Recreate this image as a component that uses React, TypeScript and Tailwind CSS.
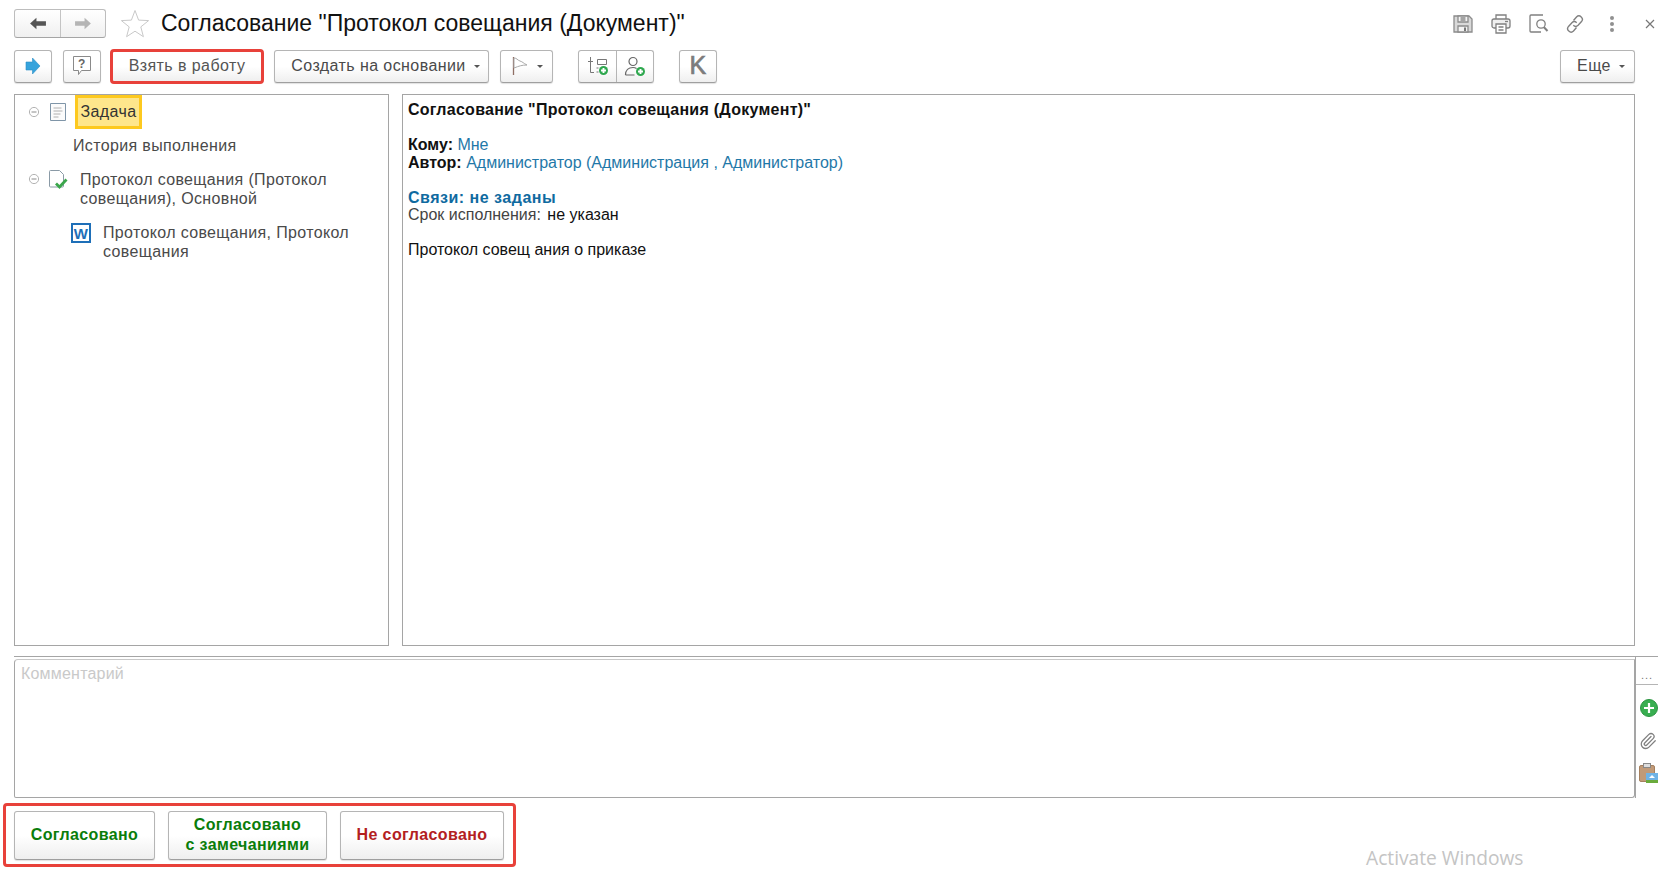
import React from "react";
import { Paperclip } from "lucide-react";

const btn = "flex items-center justify-center rounded-[3px] border border-[#b5b5b5] border-b-[#9f9f9f] bg-gradient-to-b from-white via-white to-[#efefef] shadow-[0_1px_1px_rgba(0,0,0,0.12)]";
const caret = <span className="ml-2 mt-[1px] h-0 w-0 border-x-[3px] border-t-[3px] border-x-transparent border-t-[#555]" />;

function GreenPlus({ x, y, r }: { x: number; y: number; r: number }) {
  return (
    <g stroke="none">
      <circle cx={x} cy={y} r={r} fill="#2fa84f" />
      <path d={`M${x - r * 0.55} ${y}H${x + r * 0.55}M${x} ${y - r * 0.55}V${y + r * 0.55}`} stroke="#fff" strokeWidth={r * 0.42} />
    </g>
  );
}

function Minus() {
  return (
    <svg width="12" height="12" viewBox="0 0 12 12" className="shrink-0">
      <circle cx="6" cy="6" r="4.6" fill="#fff" stroke="#b3b3b3" />
      <path d="M3.5 6h5" stroke="#8a8a8a" />
    </svg>
  );
}

export default function App() {
  return (
    <div className="flex h-[871px] w-[1659px] flex-col overflow-hidden bg-white font-['Liberation_Sans',Arial,sans-serif] text-[16px] text-[#4a4a4a] relative">
      {/* Title row */}
      <div className="ml-[14px] mr-[4px] mt-[9px] flex h-[29px] items-center">
        <div className="flex h-[29px] w-[92px] rounded-[3px] border border-[#bdbdbd] border-b-[#a5a5a5] bg-gradient-to-b from-white to-[#f0f0f0]">
          <div className="flex w-[46px] items-center justify-center border-r border-[#c4c4c4]">
            <svg width="19" height="15" viewBox="0 0 18 14"><path d="M8 1.5 2 7l6 5.5V9.200h9V4.800H8z" fill="#555" /></svg>
          </div>
          <div className="flex flex-1 items-center justify-center">
            <svg width="19" height="15" viewBox="0 0 18 14"><path d="M10 1.5 16 7l-6 5.500V9.200H1V4.800h9z" fill="#b5b5b5" /></svg>
          </div>
        </div>
        <svg width="30" height="29" viewBox="0 0 30 29" className="ml-[14px]">
          <path d="M15 1.500l3.600 9.600 10 .5-7.800 6.300 2.600 9.800L15 22.200l-8.400 5.500 2.600-9.800-7.800-6.300 10-.5z" fill="#fff" stroke="#c9c9c9" />
        </svg>
        <div className="ml-[11px] whitespace-nowrap text-[23px] leading-[29px] text-[#111]">Согласование "Протокол совещания (Документ)"</div>
        <div className="ml-auto flex items-center">
          <svg width="20" height="18" viewBox="0 0 20 18" fill="none" stroke="#8c8c8c" strokeWidth="1.300">
            <path d="M1 1h15l3 3v13H1z" fill="#d9d9d9" /><path d="M5 1h10v6H5z" fill="#f3f3f3" /><path d="M5 11h10v6H5z" fill="#f3f3f3" /><path d="M7.500 3h5M7.500 5h5" /><path d="M11 12.500h2V16h-2z" fill="#777" stroke="none" />
          </svg>
          <svg width="20" height="20" viewBox="0 0 20 20" fill="none" stroke="#808080" strokeWidth="1.300" className="ml-[18px]">
            <path d="M5 5V1h10v4" /><rect x="1" y="5" width="18" height="9" rx="2" fill="#efefef" /><path d="M5 10h10v9H5z" fill="#fff" /><path d="M7.500 13h5M7.500 16h5" /><path d="M14 7.500h3" />
          </svg>
          <svg width="20" height="19" viewBox="0 0 20 19" fill="none" stroke="#808080" strokeWidth="1.300" className="ml-[18px]">
            <path d="M12 18H2a1 1 0 0 1-1-1V2a1 1 0 0 1 1-1h12" /><circle cx="12" cy="10" r="4.200" /><path d="M15 13.200 18.500 17" strokeWidth="2" />
          </svg>
          <svg width="20" height="20" viewBox="0 0 20 20" fill="none" stroke="#808080" strokeWidth="1.400" className="ml-[16px]">
            <path d="M8.500 6.500l3-3.500a3.400 3.400 0 0 1 5 4.600l-3.400 3.600a3.400 3.400 0 0 1-4.800 0" /><path d="M11.500 13.500l-3 3.500a3.400 3.400 0 0 1-5-4.600l3.400-3.600a3.400 3.400 0 0 1 4.800 0" />
          </svg>
          <div className="ml-[25px] flex flex-col gap-[2px]">
            <span className="h-[4px] w-[4px] rounded-full bg-[#909090]" />
            <span className="h-[4px] w-[4px] rounded-full bg-[#909090]" />
            <span className="h-[4px] w-[4px] rounded-full bg-[#909090]" />
          </div>
          <svg width="10" height="10" viewBox="0 0 10 10" stroke="#777" strokeWidth="1.200" className="ml-[31px]"><path d="M1 1l8 8M9 1 1 9" /></svg>
        </div>
      </div>

      {/* Toolbar */}
      <div className="ml-[14px] mr-[24px] mt-[11px] flex h-[34px] items-center tracking-[0.42px]">
        <div className={`${btn} h-[33px] w-[38px]`}>
          <svg width="16" height="18" viewBox="0 0 16 18"><path d="M7.500 1 15 9l-7.500 8v-4H1V5h6.500z" fill="#36a3dc" stroke="#2a8fc6" strokeWidth="0.600" /></svg>
        </div>
        <div className={`${btn} ml-[11px] h-[33px] w-[38px]`}>
          <svg width="20" height="22" viewBox="0 0 20 22" fill="none" stroke="#8a8a8a"><path d="M1.500 1.500h17v14h-9l-3 4v-4h-5z" fill="#fff" /><text x="10" y="13" textAnchor="middle" fontSize="12" fontWeight="700" fill="#666" stroke="none" fontFamily="Liberation Sans">?</text></svg>
        </div>
        <div className="ml-[9px] flex h-[35px] w-[154px] items-center justify-center rounded-[4px] border-[3px] border-[#e8413a] bg-gradient-to-b from-white via-white to-[#efefef] text-[#555]">Взять в работу</div>
        <div className={`${btn} ml-[10px] h-[33px] w-[215px] pl-[8px]`}>Создать на основании{caret}</div>
        <div className={`${btn} ml-[11px] h-[33px] w-[53px]`}>
          <svg width="18" height="20" viewBox="0 0 18 20" fill="none"><path d="M2.500 1v18" stroke="#8f6f64" strokeWidth="1.300" /><path d="M3 2c3 0 3 2 6 3s3 2 7 4c-5 0-8 1-13 3z" fill="#fff" stroke="#aaa" /></svg>
          {caret}
        </div>
        <div className="ml-[25px] flex h-[33px] w-[76px] rounded-[3px] border border-[#b5b5b5] border-b-[#9f9f9f] bg-gradient-to-b from-white via-white to-[#efefef] shadow-[0_1px_1px_rgba(0,0,0,0.12)]">
          <div className="flex w-[38px] items-center justify-center border-r border-[#b5b5b5]">
            <svg width="22" height="20" viewBox="0 0 22 20" fill="none" stroke="#777"><path d="M3.500 1v15.500H7M1 5.500h5" /><path d="M10.500 3.500h9v5h-9z" /><path d="M9.500 12h2M9.500 16h2" /><GreenPlus x={16.500} y={14.500} r={4.500} /></svg>
          </div>
          <div className="flex flex-1 items-center justify-center">
            <svg width="22" height="21" viewBox="0 0 22 21" fill="none" stroke="#666" strokeWidth="1.200"><circle cx="9" cy="5.500" r="4" /><path d="M1.500 19c0-5 3-7.500 7.500-7.500 1.500 0 2.500.3 3.500 1M1.500 19h9" /><GreenPlus x={16.500} y={15.500} r={4.500} /></svg>
          </div>
        </div>
        <div className={`${btn} ml-[25px] h-[33px] w-[38px] text-[25px] font-normal text-[#7c7c7c] [-webkit-text-stroke:0.7px_#7c7c7c]`}>K</div>
        <div className={`${btn} ml-auto h-[33px] w-[75px] pl-[7px]`}>Еще{caret}</div>
      </div>

      {/* Panels */}
      <div className="ml-[14px] mr-[24px] mt-[11px] flex h-[552px] gap-[13px]">
        <div className="w-[375px] border border-[#a5a5a5] tracking-[0.35px] text-[#4a4a4a]">
          <div className="flex h-[33px] items-center">
            <div className="ml-[13px] flex"><Minus /></div>
            <svg width="16" height="18" viewBox="0 0 16 18" fill="none" stroke="#7f95a8" className="ml-[10px]"><path d="M.5.500h15v17H.5z" fill="#fbfbfb" /><path d="M3.500 5h8M3.500 8h9M3.500 11h7M3.500 14h5" stroke="#b0b0b0" /></svg>
            <div className="ml-[9px] flex h-[34px] w-[67px] items-center justify-center border-[3px] border-[#fdc91f] bg-[#fee68c] text-[#333]">Задача</div>
          </div>
          <div className="ml-[58px] mt-[8px] leading-[20px]">История выполнения</div>
          <div className="mt-[14px] flex items-start">
            <div className="ml-[13px] mt-[3px] flex"><Minus /></div>
            <svg width="19" height="20" viewBox="0 0 19 20" fill="none" className="ml-[9px] shrink-0"><path d="M1.500.5h9l4 4V16a1 1 0 0 1-1 1h-12a1 1 0 0 1-1-1V1.500a1 1 0 0 1 1-1z" fill="#fff" stroke="#8a9aa6" /><path d="M7 13.500l3.500 3.500 7-7.500" stroke="#3aa64b" strokeWidth="2.800" /></svg>
            <div className="ml-[12px] w-[280px] leading-[19px]">Протокол совещания (Протокол совещания), Основной</div>
          </div>
          <div className="mt-[15px] flex items-start">
            <div className="ml-[56px] flex h-[20px] w-[20px] shrink-0 items-center justify-center border-[2px] border-[#1e6fb8] bg-white text-[15px] font-bold leading-none text-[#1e6fb8]">W</div>
            <div className="ml-[12px] w-[270px] leading-[19px]">Протокол совещания, Протокол совещания</div>
          </div>
        </div>
        <div className="min-w-0 flex-1 border border-[#a5a5a5] pl-[5px] pt-[6px] text-[16px] leading-[17.500px] text-[#111]">
          <div className="font-bold tracking-[0.26px]">Согласование "Протокол совещания (Документ)"</div>
          <div className="mt-[17.500px]"><b>Кому:</b> <span className="text-[#1f78a8]">Мне</span></div>
          <div><b>Автор:</b> <span className="text-[#1f78a8]">Администратор (Администрация , Администратор)</span></div>
          <div className="mt-[17.500px] font-bold tracking-[0.5px] text-[#0f6aa0]">Связи: не заданы</div>
          <div><span className="text-[#444]">Срок исполнения:</span> <span className="ml-[2px]">не указан</span></div>
          <div className="mt-[17.500px]">Протокол совещ ания о приказе</div>
        </div>
      </div>

      {/* Comment */}
      <div className="ml-[14px] mr-[1px] mt-[10px] flex h-[142px] border-t border-[#a5a5a5]">
        <div className="mt-[2px] h-[139px] w-[1621px] rounded-bl-[2px] rounded-br-[3px] rounded-tl-[4px] border border-x-[#a5a5a5] border-b-[#a5a5a5] border-t-[#c8c8c8] pl-[6px] pt-[2px] tracking-[0.2px] text-[#c9c9c9]">Комментарий</div>
        <div className="flex w-[23px] flex-col items-center border-l border-[#a5a5a5]">
          <div className="flex h-[28px] w-full items-center justify-center border-b border-[#b5b5b5] pt-[10px] text-[11px] tracking-[1px] text-[#777]">...</div>
          <svg width="18" height="18" viewBox="0 0 18 18" className="ml-[3px] mt-[14px] shrink-0"><circle cx="9" cy="9" r="8.500" fill="#38ae50" stroke="#2b9440" /><path d="M4 9h10M9 4v10" stroke="#fff" strokeWidth="2.200" /></svg>
          <Paperclip size={18} color="#808080" strokeWidth={1.7} className="ml-[2px] mt-[15px] shrink-0" />
          <svg width="19" height="20" viewBox="0 0 19 20" className="ml-[2px] mt-[13px] shrink-0">
            <rect x="0.500" y="2.500" width="15" height="16" rx="1.500" fill="#c19a78" stroke="#a5805f" />
            <rect x="4.500" y="0.500" width="7" height="4" fill="#ddd" stroke="#888" />
            <rect x="7" y="10" width="12" height="10" fill="#6fb3e6" />
            <path d="M7 17h12v3H7z" fill="#6aab3c" />
            <path d="M10 15l3-3 3 3z" fill="#fff" />
          </svg>
        </div>
      </div>

      {/* Bottom actions */}
      <div className="ml-[3px] mt-[5px] flex h-[64px] w-[513px] items-center rounded-[4px] border-[3px] border-[#e8413a] pl-[8px] text-[16px] font-bold leading-[20px] tracking-[0.38px]">
        <div className={`${btn} h-[49px] w-[141px] text-[#0a7d0a]`}>Согласовано</div>
        <div className={`${btn} ml-[13px] h-[49px] w-[159px] text-center text-[#0a7d0a]`}>Согласовано<br />с замечаниями</div>
        <div className={`${btn} ml-[13px] h-[49px] w-[164px] text-[#b3201f]`}>Не согласовано</div>
      </div>

      <div className="absolute left-[1366px] top-[846px] font-['Open_Sans',sans-serif] text-[19.200px] leading-[24px] text-[#c4c4c4]">Activate Windows</div>
    </div>
  );
}
